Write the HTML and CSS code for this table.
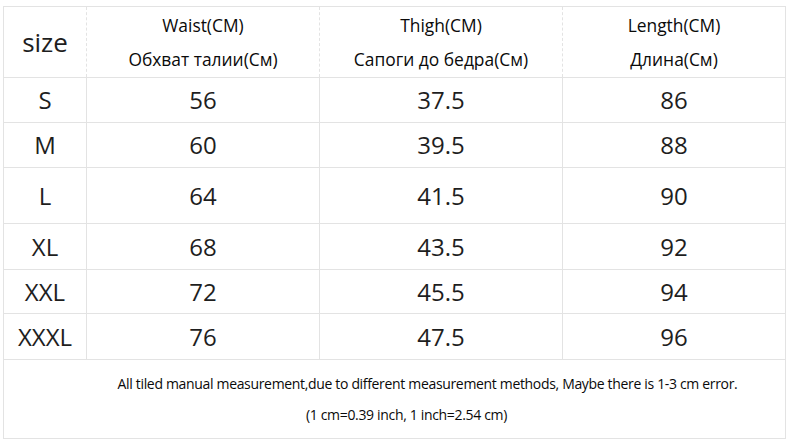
FILE: index.html
```html
<!DOCTYPE html>
<html>
<head>
<meta charset="utf-8">
<link rel="stylesheet" href="styles.css">
</head>
<body>
<table class="chart">
  <colgroup>
    <col class="c-size">
    <col class="c-waist">
    <col class="c-thigh">
    <col class="c-length">
  </colgroup>
  <thead>
    <tr class="head">
      <th class="size-h">size</th>
      <th><div>Waist(CM)</div><div>Обхват талии(См)</div></th>
      <th><div>Thigh(CM)</div><div>Сапоги до бедра(См)</div></th>
      <th><div>Length(CM)</div><div>Длина(См)</div></th>
    </tr>
  </thead>
  <tbody>
    <tr class="r45"><td class="sz">S</td><td>56</td><td>37.5</td><td>86</td></tr>
    <tr class="r45"><td class="sz">M</td><td>60</td><td>39.5</td><td>88</td></tr>
    <tr class="r56"><td class="sz">L</td><td>64</td><td>41.5</td><td>90</td></tr>
    <tr class="r46"><td class="sz">XL</td><td>68</td><td>43.5</td><td>92</td></tr>
    <tr class="r44"><td class="sz">XXL</td><td>72</td><td>45.5</td><td>94</td></tr>
    <tr class="r46"><td class="sz">XXXL</td><td>76</td><td>47.5</td><td>96</td></tr>
    <tr class="foot">
      <td colspan="4">
        <p class="note note-1">All tiled manual measurement,due to different measurement methods, Maybe there is 1-3 cm error.</p>
        <p class="note note-2">(1 cm=0.39 inch, 1 inch=2.54 cm)</p>
      </td>
    </tr>
  </tbody>
</table>
</body>
</html>
```
FILE: styles.css
```css
html, body {
  margin: 0;
  padding: 0;
  background: #ffffff;
}
body {
  padding: 6px 0 0 3px;
  font-family: "Open Sans", "Noto Sans", sans-serif;
  color: #1e1e1e;
}
.chart {
  border-collapse: collapse;
  table-layout: fixed;
  width: 782px;
  border: 1px solid #e3e3e3;
}
.c-size { width: 83px; }
.c-waist { width: 233px; }
.c-thigh { width: 243px; }
.c-length { width: 223px; }

.chart th,
.chart td {
  border: 1px solid #e3e3e3;
  text-align: center;
  vertical-align: middle;
  padding: 0;
}
.head { height: 71px; }
.head th {
  font-weight: 400;
  font-size: 17.4px;
  line-height: 34px;
  color: #0a0a0a;
  border-left-style: dashed;
  border-right-style: dashed;
}
.head th.size-h {
  font-size: 26px;
  line-height: 30px;
  color: #1e1e1e;
  border-left-style: solid;
}
.head th:last-child { border-right-style: solid; }

.chart td {
  font-size: 24px;
  line-height: 30px;
}
.r44 { height: 44px; }
.r45 { height: 45px; }
.r46 { height: 46px; }
.r56 { height: 56px; }

.foot { height: 79px; }
.foot td { padding: 8px 0; }
.note {
  margin: 0;
  font-size: 14px;
  line-height: 31px;
  letter-spacing: -0.33px;
  color: #0a0a0a;
}
.note-1 { padding-left: 66px; }
.note-2 { padding-left: 24px; }
```
